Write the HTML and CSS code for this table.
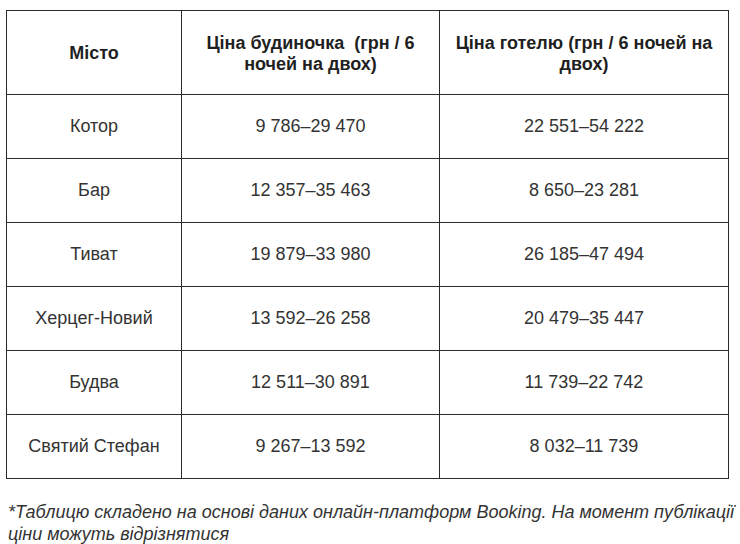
FILE: index.html
```html
<!DOCTYPE html>
<html lang="uk">
<head>
<meta charset="utf-8">
<link rel="stylesheet" href="styles.css">
</head>
<body>
<table class="prices">
  <colgroup>
    <col class="c1"><col class="c2"><col class="c3">
  </colgroup>
  <thead>
    <tr class="head">
      <th>Місто</th>
      <th>Ціна будиночка&nbsp; (грн / 6<br>ночей на двох)</th>
      <th>Ціна готелю (грн / 6 ночей на<br>двох)</th>
    </tr>
  </thead>
  <tbody>
    <tr><td>Котор</td><td>9 786–29 470</td><td>22 551–54 222</td></tr>
    <tr><td>Бар</td><td>12 357–35 463</td><td>8 650–23 281</td></tr>
    <tr><td>Тиват</td><td>19 879–33 980</td><td>26 185–47 494</td></tr>
    <tr><td>Херцег-Новий</td><td>13 592–26 258</td><td>20 479–35 447</td></tr>
    <tr><td>Будва</td><td>12 511–30 891</td><td>11 739–22 742</td></tr>
    <tr><td>Святий Стефан</td><td>9 267–13 592</td><td>8 032–11 739</td></tr>
  </tbody>
</table>
<p class="note">*Таблицю складено на основі даних онлайн-платформ Booking. На момент публікації ціни можуть відрізнятися</p>
</body>
</html>
```
FILE: styles.css
```css
html, body {
  margin: 0;
  padding: 0;
  background: #fff;
}
body {
  padding: 10px 0 0 6px;
  font-family: "Liberation Sans", Arial, sans-serif;
  color: #333;
}
.prices {
  border-collapse: collapse;
  width: 722px;
  table-layout: fixed;
}
.c1 { width: 175px; }
.c2 { width: 258px; }
.c3 { width: 289px; }
.prices th,
.prices td {
  border: 1px solid #2b2b2b;
  text-align: center;
  vertical-align: middle;
  font-size: 18px;
  padding: 0 4px;
}
.prices th {
  height: 81px;
  font-weight: bold;
  color: #1f1f1f;
  line-height: 21px;
  padding-top: 2px;
}
.prices td {
  height: 63px;
  color: #333;
  line-height: 21px;
}
.note {
  margin: 22px 0 0 2px;
  width: 734px;
  font-size: 18px;
  font-style: italic;
  line-height: 22px;
  color: #333;
}
```
